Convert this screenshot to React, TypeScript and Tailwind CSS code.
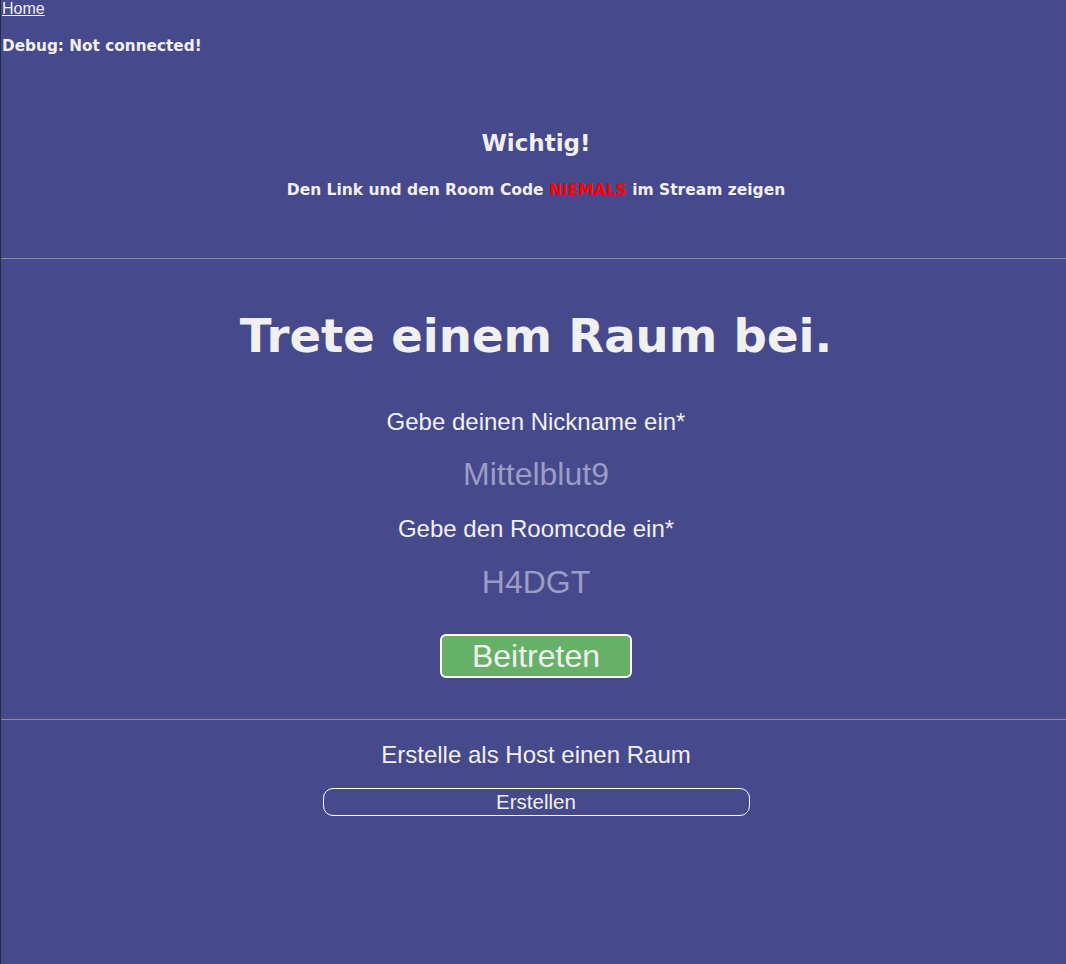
import { useState } from 'react'

const heavy = { fontFamily: '"DejaVu Sans", "Liberation Sans", sans-serif' }

export default function App() {
  const [nick, setNick] = useState('')
  const [code, setCode] = useState('')

  return (
    <div
      className="min-h-[964px] bg-[#46498b] text-[#f0f0f0] border-l border-[#26303a]"
      style={{ fontFamily: '"Liberation Sans", Arial, sans-serif' }}
    >
      <a href="#" className="block pl-[1px] text-[16px] leading-[18px] underline">
        Home
      </a>
      <p className="mt-[19px] pl-[1px] text-[15.3px] leading-[18px] font-bold" style={heavy}>
        Debug: Not connected!
      </p>

      <div className="mt-[74px] pl-[5px] text-center">
        <h2 className="text-[23px] leading-[28px] font-bold" style={heavy}>
          Wichtig!
        </h2>
        <p className="mt-[24px] text-[15.5px] leading-[18px] font-bold" style={heavy}>
          Den Link und den Room Code <span className="text-[#ff0000]">NIEMALS</span> im Stream zeigen
        </p>
      </div>

      <hr className="mt-[59px] border-0 border-t border-[#8c8c8c]" />

      <div className="flex flex-col items-center pl-[5px]">
        <h1 className="mt-[50px] text-[46.6px] leading-[54px] font-bold" style={heavy}>
          Trete einem Raum bei.
        </h1>
        <label className="mt-[45px] text-[24px] leading-[28px]">Gebe deinen Nickname ein*</label>
        <input
          value={nick}
          onChange={(e) => setNick(e.target.value)}
          placeholder="Mittelblut9"
          className="mt-[18px] h-[40px] w-[400px] bg-transparent text-center text-[32px] outline-none placeholder:text-[#9b9dc6]"
        />
        <label className="mt-[21px] text-[24px] leading-[28px]">Gebe den Roomcode ein*</label>
        <input
          value={code}
          onChange={(e) => setCode(e.target.value)}
          placeholder="H4DGT"
          className="mt-[19px] h-[40px] w-[400px] bg-transparent text-center text-[32px] outline-none placeholder:text-[#9b9dc6]"
        />
        <button className="mt-[32px] h-[44px] w-[192px] rounded-[6px] border-2 border-white bg-[#66b067] text-[32px] leading-none">
          Beitreten
        </button>
      </div>

      <hr className="mt-[41px] border-0 border-t border-[#8c8c8c]" />

      <div className="flex flex-col items-center pl-[5px]">
        <p className="mt-[21px] text-[24px] leading-[28px]">Erstelle als Host einen Raum</p>
        <button className="mt-[19px] h-[28px] w-[427px] rounded-[10px] border border-white text-[20.5px] leading-none">
          Erstellen
        </button>
      </div>
    </div>
  )
}
